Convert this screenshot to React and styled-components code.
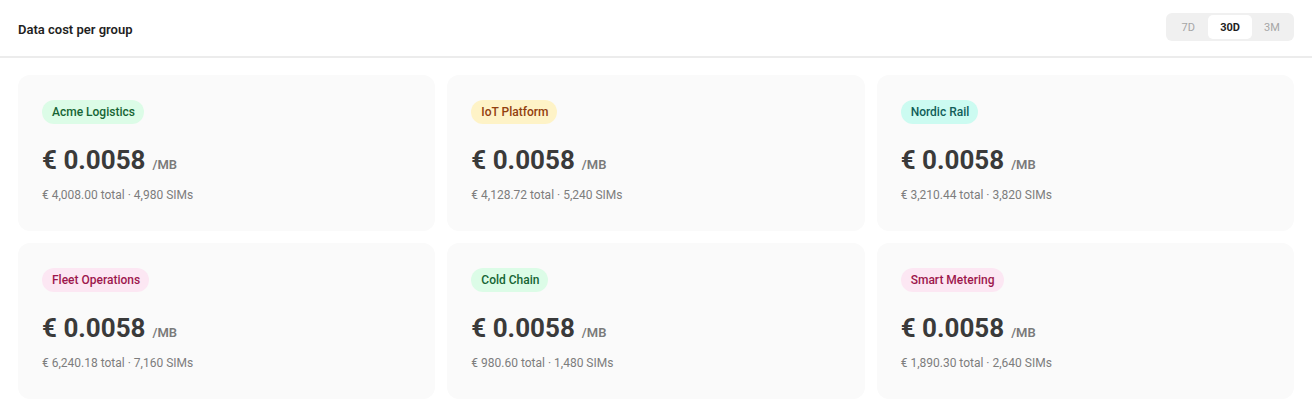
import React, { useState } from "react";
import styled, { createGlobalStyle } from "styled-components";

const Global = createGlobalStyle`
  html, body { margin: 0; padding: 0; background: #ffffff; }
  body { font-family: Roboto, "Liberation Sans", Arial, sans-serif; -webkit-font-smoothing: antialiased; }
  * { box-sizing: border-box; }
`;

const Page = styled.div`
  width: 1312px;
  background: #fff;
`;

const Header = styled.header`
  height: 58px;
  display: flex;
  align-items: center;
  justify-content: space-between;
  padding: 2px 18px 0;
  border-bottom: 2px solid #ececec;
`;

const Title = styled.h2`
  margin: 0;
  font-size: 13px;
  font-weight: 600;
  color: #1f1f1f;
`;

const Segmented = styled.div`
  display: flex;
  padding: 2px;
  background: #f0f0f0;
  border-radius: 6px;
  margin-top: -4px;
`;

const SegButton = styled.button`
  border: none;
  height: 24px;
  min-width: 40px;
  padding: 0 12px;
  border-radius: 5px;
  font-family: inherit;
  font-size: 11px;
  font-weight: ${(p) => (p.$active ? 700 : 400)};
  color: ${(p) => (p.$active ? "#1f1f1f" : "#a6a6a6")};
  background: ${(p) => (p.$active ? "#ffffff" : "transparent")};
  cursor: pointer;
`;

const Grid = styled.main`
  display: grid;
  grid-template-columns: repeat(3, 1fr);
  gap: 12px;
  padding: 17px 18px 18px;
`;

const Card = styled.section`
  height: 156px;
  background: #fafafa;
  border-radius: 12px;
  padding: 25px 24px 0;
  display: flex;
  flex-direction: column;
  align-items: flex-start;
`;

const tones = {
  green: { bg: "#dcfce7", fg: "#166534" },
  amber: { bg: "#fef3c7", fg: "#92400e" },
  teal: { bg: "#ccfbf1", fg: "#115e59" },
  pink: { bg: "#fce7f3", fg: "#9d174d" },
};

const Badge = styled.span`
  height: 24px;
  display: inline-flex;
  align-items: center;
  padding: 0 9px 0 10px;
  border-radius: 12px;
  font-size: 12px;
  font-weight: 500;
  background: ${(p) => tones[p.$tone].bg};
  color: ${(p) => tones[p.$tone].fg};
`;

const PriceRow = styled.div`
  margin-top: 19px;
  display: flex;
  align-items: baseline;
  gap: 7px;
  line-height: 34px;
`;

const Price = styled.span`
  font-size: 26px;
  font-weight: 700;
  color: #3a3a3a;
`;

const Unit = styled.span`
  font-size: 13px;
  font-weight: 600;
  color: #7a7a7a;
`;

const Meta = styled.div`
  margin-top: 6px;
  font-size: 12px;
  color: #7d7d7d;
`;

const groups = [
  { name: "Acme Logistics", tone: "green", total: "4,008.00", sims: "4,980" },
  { name: "IoT Platform", tone: "amber", total: "4,128.72", sims: "5,240" },
  { name: "Nordic Rail", tone: "teal", total: "3,210.44", sims: "3,820" },
  { name: "Fleet Operations", tone: "pink", total: "6,240.18", sims: "7,160" },
  { name: "Cold Chain", tone: "green", total: "980.60", sims: "1,480" },
  { name: "Smart Metering", tone: "pink", total: "1,890.30", sims: "2,640" },
];

export default function App() {
  const [range, setRange] = useState("30D");
  return (
    <Page>
      <Global />
      <Header>
        <Title>Data cost per group</Title>
        <Segmented>
          {["7D", "30D", "3M"].map((r) => (
            <SegButton key={r} $active={r === range} onClick={() => setRange(r)}>
              {r}
            </SegButton>
          ))}
        </Segmented>
      </Header>
      <Grid>
        {groups.map((g) => (
          <Card key={g.name}>
            <Badge $tone={g.tone}>{g.name}</Badge>
            <PriceRow>
              <Price>€ 0.0058</Price>
              <Unit>/MB</Unit>
            </PriceRow>
            <Meta>
              € {g.total} total · {g.sims} SIMs
            </Meta>
          </Card>
        ))}
      </Grid>
    </Page>
  );
}
